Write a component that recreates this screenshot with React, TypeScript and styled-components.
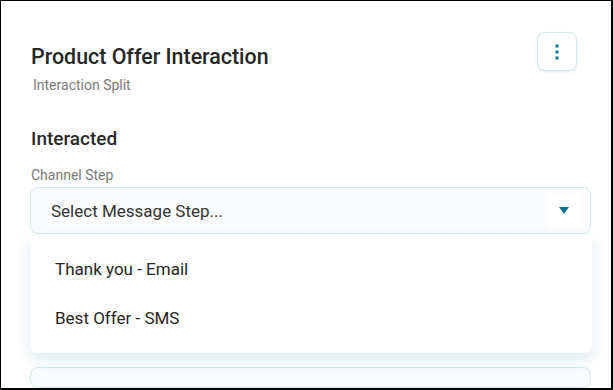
import React from "react";
import styled, { createGlobalStyle } from "styled-components";

const Global = createGlobalStyle`
  html, body { margin: 0; padding: 0; background: #ffffff; }
  * { box-sizing: border-box; }
  body { font-family: Roboto, "Liberation Sans", Arial, sans-serif; }
`;

const Frame = styled.div`
  width: 613px;
  height: 390px;
  border-style: solid;
  border-color: #000;
  border-width: 1px 2px 2px 1px;
  background: #fff;
  overflow: hidden;
  padding: 31px 20px 0 29px;
  display: flex;
  flex-direction: column;
`;

const Header = styled.div`
  display: flex;
  justify-content: space-between;
  align-items: flex-start;
  padding-left: 1px;
`;

const TitleBlock = styled.div`
  display: flex;
  flex-direction: column;
  padding-top: 11px;
`;

const Title = styled.h1`
  margin: 0;
  font-size: 21.4px;
  line-height: 28px;
  font-weight: 500;
  color: #262626;
`;

const Subtitle = styled.div`
  margin-top: 5px;
  padding-left: 2px;
  font-size: 14px;
  line-height: 18px;
  color: #7a7a7a;
`;

const MenuButton = styled.button`
  width: 40px;
  height: 39px;
  margin-top: 0;
  margin-right: 14px;
  border: 1px solid #d4e9ed;
  border-radius: 8px;
  background: #fff;
  box-shadow: 0 1px 3px rgba(20, 110, 130, 0.12);
  display: flex;
  align-items: center;
  justify-content: center;
  padding: 0;
`;

const SectionTitle = styled.h2`
  margin: 33px 0 0 1px;
  font-size: 19px;
  line-height: 24px;
  font-weight: 500;
  color: #2a2a2a;
`;

const Label = styled.div`
  margin: 15px 0 0 1px;
  font-size: 14px;
  line-height: 18px;
  color: #7a7a7a;
`;

const SelectWrap = styled.div`
  position: relative;
  margin-top: 3px;
`;

const SelectBox = styled.div`
  height: 47px;
  border: 1px solid #d5e9ed;
  border-radius: 8px;
  background: #fbfcfd;
  display: flex;
  align-items: center;
  justify-content: space-between;
  padding: 0 9px 0 20px;
  font-size: 17px;
  color: #333;
`;

const ArrowCell = styled.div`
  width: 34px;
  height: 34px;
  background: #fff;
  display: flex;
  align-items: center;
  justify-content: center;
`;

const Dropdown = styled.div`
  position: absolute;
  top: 49px;
  left: 0;
  right: -1px;
  background: #fff;
  border-radius: 0 0 8px 8px;
  box-shadow: 0 6px 16px rgba(40, 120, 140, 0.16);
  padding: 8px 0 11px;
  z-index: 2;
`;

const Option = styled.div`
  height: 49px;
  display: flex;
  align-items: center;
  padding-left: 25px;
  font-size: 17px;
  color: #262626;
`;

const NextBox = styled.div`
  margin-top: 133px;
  height: 60px;
  border: 1px solid #d5e9ed;
  border-radius: 8px;
  background: #fbfcfd;
`;

export default function App() {
  return (
    <>
      <Global />
      <Frame>
        <Header>
          <TitleBlock>
            <Title>Product Offer Interaction</Title>
            <Subtitle>Interaction Split</Subtitle>
          </TitleBlock>
          <MenuButton aria-label="More">
            <svg width="4" height="16" viewBox="0 0 4 16">
              <rect x="0.5" y="0.5" width="3" height="3" fill="#0d7a93" />
              <rect x="0.5" y="6.5" width="3" height="3" fill="#0d7a93" />
              <rect x="0.5" y="12.5" width="3" height="3" fill="#0d7a93" />
            </svg>
          </MenuButton>
        </Header>
        <SectionTitle>Interacted</SectionTitle>
        <Label>Channel Step</Label>
        <SelectWrap>
          <SelectBox>
            <span>Select Message Step...</span>
            <ArrowCell>
              <svg width="10" height="7" viewBox="0 0 10 7">
                <path d="M0 0 H10 L5 7 Z" fill="#0b7490" />
              </svg>
            </ArrowCell>
          </SelectBox>
          <Dropdown>
            <Option>Thank you - Email</Option>
            <Option>Best Offer - SMS</Option>
          </Dropdown>
        </SelectWrap>
        <NextBox />
      </Frame>
    </>
  );
}
